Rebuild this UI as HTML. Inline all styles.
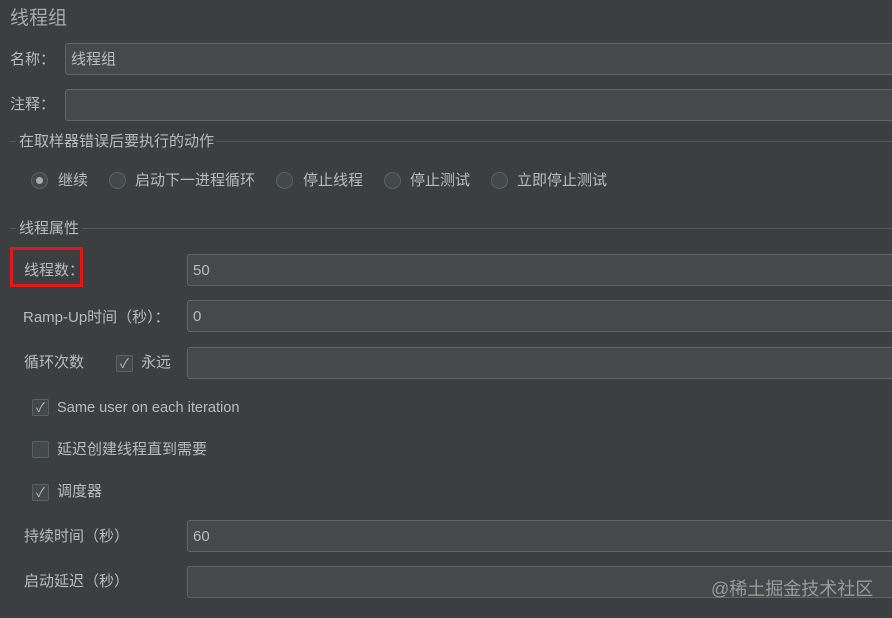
<!DOCTYPE html>
<html><head><meta charset="utf-8"><style>
body{margin:0;width:892px;height:618px;background:#3c3f41;overflow:hidden;position:relative;font-family:"Liberation Sans","Noto Sans CJK SC",sans-serif;color:#bbbbbb;font-size:15px}
.a{position:absolute;white-space:nowrap;line-height:18px}
.f{position:absolute;left:187px;width:760px;height:30px;background:#45494a;border:1px solid #646464;border-radius:3px;box-sizing:border-box;padding-left:5px;line-height:28px;color:#bbbbbb;font-size:15px}
.r{position:absolute;width:17px;height:17px;border:1px solid #5e6060;border-radius:50%;background:#43494a;box-sizing:border-box}
.c{position:absolute;width:17px;height:17px;border:1px solid #5e6060;border-radius:2px;background:#43494a;box-sizing:border-box}
.ln{position:absolute;height:1px;background:#555859}
</style></head><body>
<div class="a" style="left:10px;top:7px;font-size:19px;line-height:23px;color:#a9a9a9">线程组</div>
<div class="a" style="left:10px;top:51px">名称：</div>
<div class="f" style="left:65px;top:43px;width:880px;height:32px;line-height:31px">线程组</div>
<div class="a" style="left:10px;top:96px">注释：</div>
<div class="f" style="left:65px;top:89px;width:880px;height:32px"></div>
<div class="ln" style="left:10px;width:6px;top:141px"></div>
<div class="a" style="left:19px;top:133px">在取样器错误后要执行的动作</div>
<div class="ln" style="left:216px;width:680px;top:141px"></div>
<div class="r" style="left:31px;top:172px"><div style="position:absolute;left:4px;top:4px;width:7px;height:7px;border-radius:50%;background:#aaa"></div></div>
<div class="a" style="left:58px;top:172px">继续</div>
<div class="r" style="left:109px;top:172px"></div>
<div class="a" style="left:135px;top:172px">启动下一进程循环</div>
<div class="r" style="left:276px;top:172px"></div>
<div class="a" style="left:303px;top:172px">停止线程</div>
<div class="r" style="left:384px;top:172px"></div>
<div class="a" style="left:410px;top:172px">停止测试</div>
<div class="r" style="left:491px;top:172px"></div>
<div class="a" style="left:517px;top:172px">立即停止测试</div>
<div class="ln" style="left:10px;width:6px;top:228px"></div>
<div class="a" style="left:19px;top:220px">线程属性</div>
<div class="ln" style="left:82px;width:820px;top:228px"></div>
<div style="position:absolute;left:10px;top:247px;width:73px;height:40px;border:3px solid #e01818;box-sizing:border-box"></div>
<div class="a" style="left:24px;top:262px">线程数：</div>
<div class="f" style="top:254px;height:32px;line-height:31px">50</div>
<div class="a" style="left:23px;top:309px">Ramp-Up时间（秒）：</div>
<div class="f" style="top:300px;height:32px;line-height:31px">0</div>
<div class="a" style="left:24px;top:354px">循环次数</div>
<div class="c" style="left:116px;top:355px;color:#bbb;font-size:13px;line-height:15px;text-align:center">✓</div>
<div class="a" style="left:141px;top:354px">永远</div>
<div class="f" style="top:347px;height:32px"></div>
<div class="c" style="left:32px;top:399px;color:#bbb;font-size:13px;line-height:15px;text-align:center">✓</div>
<div class="a" style="left:57px;top:399px;font-size:14.6px">Same user on each iteration</div>
<div class="c" style="left:32px;top:441px"></div>
<div class="a" style="left:57px;top:441px">延迟创建线程直到需要</div>
<div class="c" style="left:32px;top:484px;color:#bbb;font-size:13px;line-height:15px;text-align:center">✓</div>
<div class="a" style="left:57px;top:483px">调度器</div>
<div class="a" style="left:24px;top:528px">持续时间（秒）</div>
<div class="f" style="top:520px;height:32px;line-height:31px">60</div>
<div class="a" style="left:24px;top:573px">启动延迟（秒）</div>
<div class="f" style="top:566px;height:32px"></div>
<div class="a" style="left:711px;top:578px;font-size:18px;line-height:22px;color:#9a9a9a">@稀土掘金技术社区</div>
</body></html>
